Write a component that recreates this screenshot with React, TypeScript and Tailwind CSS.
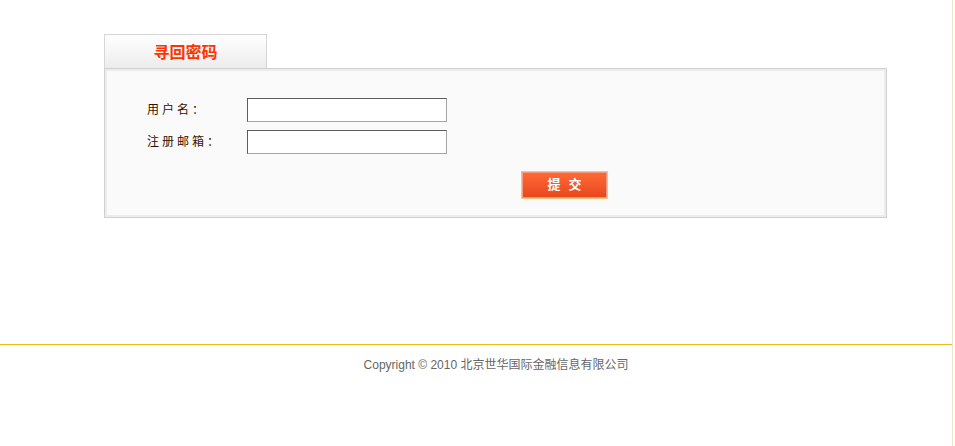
import React from "react";

export default function App() {
  const font = { fontFamily: '"Liberation Sans", "Noto Sans CJK SC", sans-serif' };
  return (
    <div className="w-[955px] h-[446px] bg-white overflow-hidden" style={font}>
      <div className="w-[953px] h-[446px] border-r border-[#eee4cc] flex flex-col">
        <div className="pt-[34px] pl-[104px] h-[344px]">
          <div className="w-[163px] h-[34px] border border-[#d6d6d6] border-b-0 bg-gradient-to-b from-[#ffffff] to-[#ececec] flex items-center justify-center pt-[3px]">
            <span className="text-[16px] font-bold text-[#ff3300] leading-none">寻回密码</span>
          </div>
          <div className="w-[783px] h-[150px] border border-[#d0d0d0] shadow-[inset_0_0_0_2px_#ececec] bg-[#fafafa] pt-[29px] pl-[42px] relative">
            <div className="flex items-center h-[24px]">
              <span className="w-[100px] text-[12px] tracking-[3px] text-[#331100]">用户名：</span>
              <input className="w-[200px] h-[24px] bg-white border border-t-[#5c5c5c] border-l-[#5c5c5c] border-r-[#a5a5a5] border-b-[#a5a5a5] outline-none" />
            </div>
            <div className="flex items-center h-[24px] mt-[8px]">
              <span className="w-[100px] text-[12px] tracking-[3px] text-[#331100]">注册邮箱：</span>
              <input className="w-[200px] h-[24px] bg-white border border-t-[#5c5c5c] border-l-[#5c5c5c] border-r-[#a5a5a5] border-b-[#a5a5a5] outline-none" />
            </div>
            <div className="mt-[17px] pl-[374px]">
              <button className="w-[87px] h-[28px] border border-[#f9c47e] bg-gradient-to-b from-[#ff6a38] to-[#e8451c] shadow-[inset_0_0_0_1px_#f59a78] text-white font-bold text-[13px] tracking-[8px] pl-[8px] flex items-center justify-center">
                提交
              </button>
            </div>
          </div>
        </div>
        <div className="border-t border-[#e8bc1c] flex justify-center pt-[11px] pl-[40px]">
          <span className="text-[12px] text-[#666666]">Copyright © 2010 北京世华国际金融信息有限公司</span>
        </div>
      </div>
    </div>
  );
}
